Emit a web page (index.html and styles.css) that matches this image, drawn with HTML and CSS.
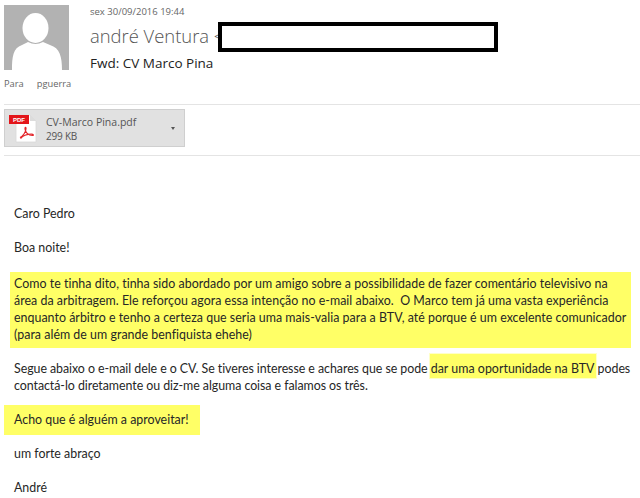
FILE: index.html
```html
<!DOCTYPE html>
<html lang="pt">
<head>
<meta charset="utf-8">
<title>Fwd: CV Marco Pina</title>
<link rel="stylesheet" href="styles.css">
</head>
<body>
<header class="head">
  <svg class="avatar" viewBox="0 0 65 65" aria-hidden="true">
    <rect width="65" height="65" fill="#b2b2b2"/>
    <ellipse cx="31.5" cy="23" rx="13" ry="15" fill="#fff"/>
    <path d="M8 65 C8 52 9 43 18 40 L24 37 Q31.5 41 39 37 L46 40 C56 43 58 52 58 65 Z" fill="#fff"/>
  </svg>
  <div class="meta">
    <div class="date">sex 30/09/2016 19:44</div>
    <div class="from">
      <span class="name">andré Ventura &lt;</span>
      <span class="redact"></span>
    </div>
    <div class="subject">Fwd: CV Marco Pina</div>
  </div>
</header>
<div class="to"><span class="to-label">Para</span><span>pguerra</span></div>
<section class="attach-bar">
  <div class="attach">
    <svg class="pdf" viewBox="0 0 30 30" aria-hidden="true">
      <path d="M8 2 H22 L28 8 V29 H8 Z" fill="#fff" stroke="#d8d8d8" stroke-width=".8"/>
      <path d="M22 2 V8 H28 Z" fill="#dcdcdc"/>
      <rect x="1" y="2" width="20" height="9" fill="#e3151a"/>
      <text x="11" y="9.2" class="pdf-text">PDF</text>
      <path d="M12 24.5 C15 23 18 19 18 15.5 C18 13.8 16.8 14 17 16 C17.3 19 20 22.5 24.5 22.5 C26 22.5 25.5 21.2 23.5 21.2 C20 21.2 15 22.5 12.5 25.5" fill="none" stroke="#e3252a" stroke-width="1.2"/>
    </svg>
    <div class="file">
      <div>CV-Marco Pina.pdf</div>
      <div class="size">299 KB</div>
    </div>
    <span class="caret"></span>
  </div>
</section>
<main class="body">
  <p>Caro Pedro</p>
  <p>Boa noite!</p>
  <p class="mark mark-wide">Como te tinha dito, tinha sido abordado por um amigo sobre a possibilidade de fazer comentário televisivo na<br>área da arbitragem. Ele reforçou agora essa intenção no e-mail abaixo.&nbsp; O Marco tem já uma vasta experiência<br>enquanto árbitro e tenho a certeza que seria uma mais-valia para a BTV, até porque é um excelente comunicador<br>(para além de um grande benfiquista ehehe)</p>
  <p class="after-mark">Segue abaixo o e-mail dele e o CV. Se tiveres interesse e achares que se pode <span class="mark-inline">dar uma oportunidade na BTV</span> podes<br>contactá-lo diretamente ou diz-me alguma coisa e falamos os três.</p>
  <p class="mark mark-short">Acho que é alguém a aproveitar!</p>
  <p class="after-short">um forte abraço</p>
  <p>André</p>
</main>
</body>
</html>
```

FILE: styles.css
```css
html, body {
  margin: 0;
  height: 498px;
  overflow: hidden;
  background: #fff;
}

body {
  font-family: "Open Sans", sans-serif;
  color: #444;
}

.head {
  display: flex;
  gap: 21px;
  padding: 5px 0 0 4px;
}

.avatar {
  width: 65px;
  height: 65px;
  flex: none;
}

.meta {
  display: flex;
  flex-direction: column;
}

.date {
  font-size: 9.5px;
  line-height: 14px;
  color: #666;
}

.from {
  display: flex;
  align-items: flex-start;
  height: 31px;
  margin-top: 2px;
}

.name {
  font-size: 18.4px;
  font-weight: 300;
  line-height: 30px;
  color: #555;
  white-space: nowrap;
}

.redact {
  width: 272px;
  height: 22px;
  margin: 1px 0 0 -6px;
  border: 4px solid #000;
  background: #fff;
  flex: none;
}

.subject {
  font-size: 13.5px;
  line-height: 14px;
  margin-top: 4px;
  color: #222;
}

.to {
  display: flex;
  gap: 13px;
  padding: 7px 0 0 4px;
  font-size: 9.3px;
  line-height: 14px;
  color: #666;
}

.attach-bar {
  margin: 13px 0 0 4px;
  padding: 4px 0 8px;
  border-top: 1px solid #e4e4e4;
  border-bottom: 1px solid #e4e4e4;
}

.attach {
  display: flex;
  align-items: center;
  box-sizing: border-box;
  width: 181px;
  height: 38px;
  background: #e1e1e1;
  border: 1px solid #cfcfcf;
  color: #555;
}

.pdf {
  width: 30px;
  height: 30px;
  margin-left: 3px;
  flex: none;
}

.pdf-text {
  font-family: "Liberation Sans", sans-serif;
  font-size: 6px;
  font-weight: 700;
  fill: #fff;
  text-anchor: middle;
}

.file {
  margin: 2px 0 0 8px;
  font-size: 10.5px;
  line-height: 14px;
}

.size {
  font-size: 10px;
  letter-spacing: -0.2px;
}

.caret {
  margin-left: auto;
  margin-right: 9px;
  border-left: 2.5px solid transparent;
  border-right: 2.5px solid transparent;
  border-top: 3px solid #555;
}

.body {
  padding: 49px 0 0 14px;
  font-family: "Lato", sans-serif;
  font-size: 12.4px;
  line-height: 17px;
  color: #262626;
}

.body p {
  margin: 0 0 17px;
  white-space: nowrap;
}

.body .mark {
  background: #ffff66;
}

.body .mark-wide {
  width: 621px;
  height: 76px;
  box-sizing: border-box;
  margin: -1px 0 0 -4px;
  padding: 2.5px 6px 5.5px 4px;
  letter-spacing: 0.03px;
}

.body .after-mark {
  margin: 11.5px 0 0;
  letter-spacing: -0.05px;
}

.body .mark-short {
  width: 196px;
  box-sizing: border-box;
  margin: 11.5px 0 0 -10px;
  padding: 5.5px 0 7.5px 10px;
}

.body .after-short {
  margin-top: 9.5px;
}

.mark-inline {
  background: #ffff66;
  padding: 7px 1px 2px;
  margin: 0 -1px;
  letter-spacing: 0.02px;
  box-shadow: 0 0 0 1px #ffffc8;
}
```
